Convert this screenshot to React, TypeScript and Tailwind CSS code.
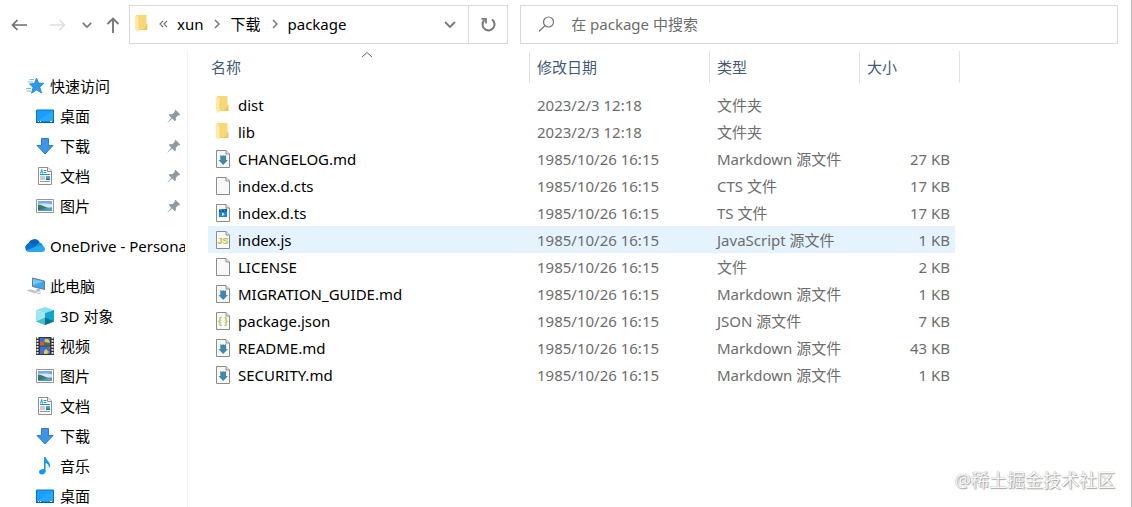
import type { ReactNode } from "react";

function Folder() {
  return (
    <svg width="14" height="18" viewBox="0 0 14 18" aria-hidden="true">
      <path d="M1 0h10.500v9l.8.8V15H3z" fill="#f8d775" />
      <path d="M11.500 9h.8v6H6l4-2z" fill="#efc75e" />
      <path d="M0 .8 4 2v12.800L2.600 17 0 14.800z" fill="#ffe9a8" />
      <path d="M4 2v12.800" stroke="#f4cf72" strokeWidth=".7" />
    </svg>
  );
}

function Page({ children }: { children?: ReactNode }) {
  return (
    <svg width="14" height="18" viewBox="0 0 14 18" aria-hidden="true">
      <path d="M.5.5h9.500l3.500 3.500v13.500H.5z" fill="#f7f8f8" stroke="#8c8c8c" />
      <path d="M10 .5V4h3.500" fill="#e8e8e8" stroke="#8c8c8c" />
      {children}
    </svg>
  );
}

function MarkdownFile() {
  return (
    <Page>
      <path d="M4.300 4.800 5.800 6 7.200 5.200 8.600 6l1.500-1.200V10h1.900l-4.800 5-4.800-5h1.900z" fill="#4488a8" />
    </Page>
  );
}

function TsFile() {
  return (
    <Page>
      <path d="M3 6h8v7H3z" fill="#1688e0" />
      <path d="M3 5.500 11 4.800V7.500L3 8z" fill="#0754a8" />
      <path d="m4.500 5.800 1.300 1.700M8 5.500l1.300 1.700" stroke="#49b8f5" />
      <path d="M6 8.500v3.400l2.800-1.700z" fill="#fff" />
    </Page>
  );
}

function JsFile() {
  return (
    <Page>
      <text x="7" y="13" textAnchor="middle" fontFamily="Liberation Sans, sans-serif" fontSize="9" fontWeight="bold" fill="#b9bf3c">JS</text>
    </Page>
  );
}

function JsonFile() {
  return (
    <Page>
      <text x="7" y="12" textAnchor="middle" fontFamily="Liberation Sans, sans-serif" fontSize="9" fontWeight="bold" fill="#b0b82e">{"{ }"}</text>
    </Page>
  );
}

function QuickAccess() {
  return (
    <svg width="20" height="18" viewBox="0 0 20 18" aria-hidden="true">
      <path d="m11.500 1 2 5 5.500.3-4.200 3.600 1.700 6.100-5-3.100-5 3.300 1.600-5.900L4.500 7l5-.6z" fill="#2a9be8" stroke="#1b7fc8" strokeWidth=".8" />
      <path d="M4.500 2.500H9M2.500 5H8M1 11.500h5M1.500 14H6" stroke="#6fc0f3" strokeWidth="1.100" />
    </svg>
  );
}

function Desktop() {
  return (
    <svg width="18" height="18" viewBox="0 0 18 18" aria-hidden="true">
      <path d="M.5 3h17v12H.5z" fill="#1a9fff" stroke="#0b73bd" />
      <path d="M1 14 17 4v10z" fill="#2fb0ff" opacity=".6" />
      <path d="M0 15.500h18" stroke="#075f9f" />
      <path d="M2 14.500h1M4 14.500h1M14 14.500h2" stroke="#fff" />
    </svg>
  );
}

function Download() {
  return (
    <svg width="18" height="18" viewBox="0 0 18 18" aria-hidden="true">
      <path d="M5.500 1.500h7v7H17l-8 8.500-8-8.500h4.500z" fill="#3a97e8" stroke="#2d7cc6" />
    </svg>
  );
}

function Documents() {
  return (
    <svg width="18" height="18" viewBox="0 0 18 18" aria-hidden="true">
      <path d="M2.500.5H12l3.500 3.500v13.500h-13z" fill="#fff" stroke="#8f8f8f" />
      <path d="M11.500.5v4h4" fill="#eee" stroke="#8f8f8f" />
      <path d="m4.500 6.500 1.200-4 .8 4M7.500 3.500h3M7.500 5.500h3M4 7.500h10" fill="none" stroke="#1d8fd6" />
      <path d="M4 10h5M4 12h5M4 14.500h10" stroke="#999" />
      <path d="M10 9h4v4h-4z" fill="#4aa3dc" />
      <path d="m10 11.500 2 .5 2-.5V13h-4z" fill="#236e62" />
    </svg>
  );
}

function Pictures() {
  return (
    <svg width="18" height="18" viewBox="0 0 18 18" aria-hidden="true">
      <path d="M.5 2.500h17v13H.5z" fill="#fff" stroke="#969696" />
      <path d="M2 4h14v10H2z" fill="#78a9ee" />
      <path d="M2 6.500c4 1 7-1 14 1v3H2z" fill="#d3e8f7" />
      <path d="M2 7.500c4 .5 7 2.500 10 3.500H2z" fill="#3c7a5c" />
      <path d="M2 11c5 .5 9 0 14-.5V14H2z" fill="#5a9cc0" />
      <path d="M2 11c4 .2 7 .5 10 1-4 .5-7 .8-10 .8z" fill="#2d6861" />
    </svg>
  );
}

function OneDrive() {
  return (
    <svg width="20" height="18" viewBox="0 0 20 18" aria-hidden="true">
      <path d="M5 14.500A4.500 4.500 0 0 1 3.500 6.200 6.300 6.300 0 0 1 14.700 5l-2 5z" fill="#0364b8" />
      <path d="M10 9.500 14.500 5.600A4.300 4.300 0 0 1 18 9l-2 3z" fill="#1490df" />
      <path d="M4.500 15A4.500 4.500 0 1 1 6.800 6.500l6.200 4L6 15z" fill="#0f6fd0" />
      <path d="M4.500 15a4.400 4.400 0 0 1-3.300-1.400L12 9c3-1 8-.3 8 2.800a3.200 3.200 0 0 1-3.200 3.200z" fill="#28a8ea" />
    </svg>
  );
}

function Computer() {
  return (
    <svg width="20" height="18" viewBox="0 0 20 18" aria-hidden="true">
      <path d="m7.500 1 12 3v8.500l-12-3z" fill="#3ba7ee" stroke="#6b7d8c" />
      <path d="m8 2 10.500 2.500L8 8z" fill="#74c8fa" />
      <path d="m12 11.500 3.500.9-.5 2-4-1z" fill="#aeb7bd" />
      <path d="m1 13.500 4-1.300 10 2.800-5 1.500z" fill="#d5dade" />
      <path d="m3 13.500 8 2.200M5 12.800l8 2.200" stroke="#aab2b8" strokeWidth=".6" />
      <path d="m12 16.500 3.500-1 1 .8-3.500 1z" fill="#b6bdc2" />
    </svg>
  );
}

function Cube() {
  return (
    <svg width="18" height="18" viewBox="0 0 18 18" aria-hidden="true">
      <path d="m9 0 9 3-9 3-9-3z" fill="#8be0ea" />
      <path d="m0 3 9 3v12l-9-3.500z" fill="#a0e6ee" />
      <path d="M18 3 9 6v12l9-3.500z" fill="#12a5cf" />
      <path d="m0 14.500 9-4v7.500z" fill="#45bfcc" />
      <path d="m9 10.500 9 4L9 18z" fill="#08718c" />
    </svg>
  );
}

function Video() {
  return (
    <svg width="18" height="18" viewBox="0 0 18 18" aria-hidden="true">
      <path d="M0 0h18v18H0z" fill="#343434" />
      <path d="M1.500 0v18M16.500 0v18" stroke="#ededed" strokeWidth="2" strokeDasharray="1.800 1.200" />
      <path d="M4 1h10v7.500H4zM4 9.500h10V17H4z" fill="#3b70d4" />
      <path d="M4 5h4l2 3.500H4z" fill="#df5340" />
      <path d="M9 2h3l2 3-2 2H8z" fill="#f0c62f" />
      <path d="m8 5 6 1-2 2.500H8z" fill="#357943" />
      <path d="m8 14 2-2 3 3-2 2H8z" fill="#ebc63a" />
      <path d="M11 9.500h3v3z" fill="#d84e3b" />
    </svg>
  );
}

function Music() {
  return (
    <svg width="18" height="18" viewBox="0 0 18 18" aria-hidden="true">
      <ellipse cx="6.300" cy="14.800" rx="3.300" ry="2.600" fill="#129bf4" transform="rotate(-18 6.300 14.800)" />
      <path d="M8 15V0h1.800c.2 3.500 4.500 4.500 4.200 8.500 0 1-.4 2-1.200 3 .4-3-.6-4.500-3.200-5.500v9z" fill="#129bf4" />
    </svg>
  );
}

function Pin() {
  return (
    <svg width="14" height="14" viewBox="0 0 14 14" aria-hidden="true">
      <path d="m8.500.8 4.700 4.700-1 1-1-.2-2.400 2.400.1 2.500-1 1-2.700-2.700L.8 13.500l-.3-.3 3.800-4.500-2.600-2.600 1-1 2.700.1 2.400-2.400-.2-1z" fill="#8e9ba3" />
    </svg>
  );
}

function Chevron({ down = false, small = false }: { down?: boolean; small?: boolean }) {
  if (down) {
    return (
      <svg width={small ? 10 : 12} height={small ? 8 : 9} viewBox="0 0 12 9" aria-hidden="true">
        <path d="m1 2 5 5 5-5" fill="none" stroke="#777" strokeWidth={small ? 2 : 1.8} />
      </svg>
    );
  }
  return (
    <svg width="6" height="10" viewBox="0 0 6 10" aria-hidden="true">
      <path d="m1 1 4 4-4 4" fill="none" stroke="#777" strokeWidth="1.500" />
    </svg>
  );
}

function Arrow({ className }: { className: string }) {
  return (
    <svg className={className} width="16" height="14" viewBox="0 0 16 14" aria-hidden="true">
      <path d="M6.500 2 1.500 7l5 5M1.500 7H16" fill="none" stroke="currentColor" strokeWidth="1.700" />
    </svg>
  );
}

type Place = { label: string; icon: ReactNode; pinned?: boolean };

const quick: Place[] = [
  { label: "桌面", icon: <Desktop />, pinned: true },
  { label: "下载", icon: <Download />, pinned: true },
  { label: "文档", icon: <Documents />, pinned: true },
  { label: "图片", icon: <Pictures />, pinned: true },
];

const computer: Place[] = [
  { label: "3D 对象", icon: <Cube /> },
  { label: "视频", icon: <Video /> },
  { label: "图片", icon: <Pictures /> },
  { label: "文档", icon: <Documents /> },
  { label: "下载", icon: <Download /> },
  { label: "音乐", icon: <Music /> },
  { label: "桌面", icon: <Desktop /> },
];

function PlaceGroup({ label, icon, places = [] }: Place & { places?: Place[] }) {
  return (
    <section>
      <a href="#" className="flex h-[30px] items-center gap-[5px] overflow-hidden pl-[25px] whitespace-nowrap">
        <span className="shrink-0">{icon}</span>
        {label}
      </a>
      {places.map((p) => (
        <a href="#" key={p.label} className="flex h-[30px] items-center gap-1.5 pr-1 pl-9 whitespace-nowrap">
          <span className="shrink-0">{p.icon}</span>
          <span className="flex-1">{p.label}</span>
          {p.pinned && <Pin />}
        </a>
      ))}
    </section>
  );
}

const files = [
  { name: "dist", icon: <Folder />, date: "2023/2/3 12:18", type: "文件夹", size: "" },
  { name: "lib", icon: <Folder />, date: "2023/2/3 12:18", type: "文件夹", size: "" },
  { name: "CHANGELOG.md", icon: <MarkdownFile />, date: "1985/10/26 16:15", type: "Markdown 源文件", size: "27 KB" },
  { name: "index.d.cts", icon: <Page />, date: "1985/10/26 16:15", type: "CTS 文件", size: "17 KB" },
  { name: "index.d.ts", icon: <TsFile />, date: "1985/10/26 16:15", type: "TS 文件", size: "17 KB" },
  { name: "index.js", icon: <JsFile />, date: "1985/10/26 16:15", type: "JavaScript 源文件", size: "1 KB", active: true },
  { name: "LICENSE", icon: <Page />, date: "1985/10/26 16:15", type: "文件", size: "2 KB" },
  { name: "MIGRATION_GUIDE.md", icon: <MarkdownFile />, date: "1985/10/26 16:15", type: "Markdown 源文件", size: "1 KB" },
  { name: "package.json", icon: <JsonFile />, date: "1985/10/26 16:15", type: "JSON 源文件", size: "7 KB" },
  { name: "README.md", icon: <MarkdownFile />, date: "1985/10/26 16:15", type: "Markdown 源文件", size: "43 KB" },
  { name: "SECURITY.md", icon: <MarkdownFile />, date: "1985/10/26 16:15", type: "Markdown 源文件", size: "1 KB" },
];

function Toolbar() {
  return (
    <header className="flex shrink-0 gap-3 pt-[5px] pr-[13px] pb-[7px]">
      <div className="flex w-5/11 shrink-0">
        <div className="flex w-[129px] shrink-0 items-center pl-[11px]">
          <button aria-label="后退"><Arrow className="text-[#6e6e6e]" /></button>
          <button aria-label="前进" className="ml-[23px]"><Arrow className="rotate-180 text-[#dedede]" /></button>
          <button aria-label="最近浏览的位置" className="ml-4"><Chevron down small /></button>
          <button aria-label="上移" className="ml-[14px]">
            <svg width="14" height="16" viewBox="0 0 14 16" aria-hidden="true">
              <path d="M1.500 7 7 1.500 12.500 7M7 1.500V16" fill="none" stroke="#777" strokeWidth="1.900" />
            </svg>
          </button>
        </div>
        <div className="flex h-[39px] flex-1 items-center border border-[#d9d9d9]">
          <nav aria-label="路径" className="flex flex-1 items-center pb-0.5 pl-[5px] whitespace-nowrap">
            <Folder />
            <button aria-label="更多" className="ml-[10px]">
              <svg width="9" height="8" viewBox="0 0 9 8" aria-hidden="true">
                <path d="M4 1 1 4l3 3M8 1 5 4l3 3" fill="none" stroke="#777" strokeWidth="1.200" />
              </svg>
            </button>
            <a href="#" className="ml-[9px]">xun</a>
            <span className="ml-[11px]"><Chevron /></span>
            <a href="#" className="ml-[10px]">下载</a>
            <span className="ml-[11px]"><Chevron /></span>
            <a href="#" className="ml-[10px]">package</a>
          </nav>
          <button aria-label="以前的位置" className="mr-3"><Chevron down /></button>
          <button aria-label="刷新" className="flex h-full w-[39px] items-center justify-center border-l border-[#d9d9d9]">
            <svg width="16" height="16" viewBox="0 0 16 16" aria-hidden="true">
              <path d="M12 2.500A6 6 0 1 1 4.500 3" fill="none" stroke="#777" strokeWidth="2" />
              <path d="M1.500 1.800h4.500V6.500" fill="none" stroke="#777" strokeWidth="1.700" />
            </svg>
          </button>
        </div>
      </div>
      <label className="flex h-[39px] flex-1 items-center gap-4 border border-[#d9d9d9] pb-0.5 pl-[17px]">
        <svg width="17" height="16" viewBox="0 0 17 16" aria-hidden="true">
          <circle cx="10.500" cy="6" r="5" fill="none" stroke="#777" strokeWidth="1.200" />
          <path d="M7 9.500 1 15.500" stroke="#777" strokeWidth="1.300" />
        </svg>
        <input
          type="text"
          aria-label="搜索"
          placeholder="在 package 中搜索"
          className="min-w-0 flex-1 outline-none placeholder:text-[#6d6d6d] placeholder:opacity-100"
        />
      </label>
    </header>
  );
}

const headCell = "h-8 border-r border-[#e2e2e2] pl-[7px] text-left font-normal";

export default function App() {
  return (
    <div className="relative flex h-screen flex-col overflow-hidden border-r border-[#bdbdbd] bg-white font-['Noto_Sans','Noto_Sans_CJK_SC',sans-serif] text-[15px] leading-5 text-black">
      <Toolbar />
      <div className="flex min-h-0 flex-1">
        <aside className="flex w-[188px] shrink-0 flex-col gap-[10px] overflow-hidden border-r border-[#f2f2f2] pt-5 pr-[2px]">
          <PlaceGroup label="快速访问" icon={<QuickAccess />} places={quick} />
          <PlaceGroup label="OneDrive - Personal" icon={<OneDrive />} />
          <PlaceGroup label="此电脑" icon={<Computer />} places={computer} />
        </aside>
        <main className="min-w-0 flex-1 pl-5">
          <table className="w-[752px] table-fixed border-separate border-spacing-0 whitespace-nowrap">
            <colgroup>
              <col className="w-[322px]" />
              <col className="w-[180px]" />
              <col className="w-[150px]" />
              <col className="w-[95px]" />
              <col className="w-[5px]" />
            </colgroup>
            <thead className="text-[#44597a]">
              <tr>
                <th className="relative h-8 border-r border-[#e2e2e2] pl-[3px] text-left font-normal">
                  <button>名称</button>
                  <svg className="absolute top-0 left-1/2 -translate-x-2" width="12" height="7" viewBox="0 0 12 7" aria-hidden="true">
                    <path d="m1 6 5-4.500L11 6" fill="none" stroke="#666" />
                  </svg>
                </th>
                <th className={headCell}><button>修改日期</button></th>
                <th className={headCell}><button>类型</button></th>
                <th className="h-8 pl-[7px] text-left font-normal"><button>大小</button></th>
                <td className="border-r border-[#e2e2e2]" />
              </tr>
            </thead>
            <tbody className="text-[#6d6d6d] before:block before:h-2">
              {files.map((f) => (
                <tr key={f.name} className={f.active ? "*:bg-[#e5f3ff] *:last:bg-transparent" : ""}>
                  <td className="h-[27px] pl-2">
                    <a href="#" className="flex items-center gap-2 text-black">
                      {f.icon}
                      {f.name}
                    </a>
                  </td>
                  <td className="pl-[7px]">{f.date}</td>
                  <td className="pl-[7px]">{f.type}</td>
                  <td className="pr-[5px] text-right">{f.size}</td>
                  <td />
                </tr>
              ))}
            </tbody>
          </table>
        </main>
      </div>
      <div className="absolute right-4 bottom-[15px] text-[18px] leading-6 text-[#fafafa] [text-shadow:0_0_1px_#888,1px_1px_1px_#aaa]">
        @稀土掘金技术社区
      </div>
    </div>
  );
}
